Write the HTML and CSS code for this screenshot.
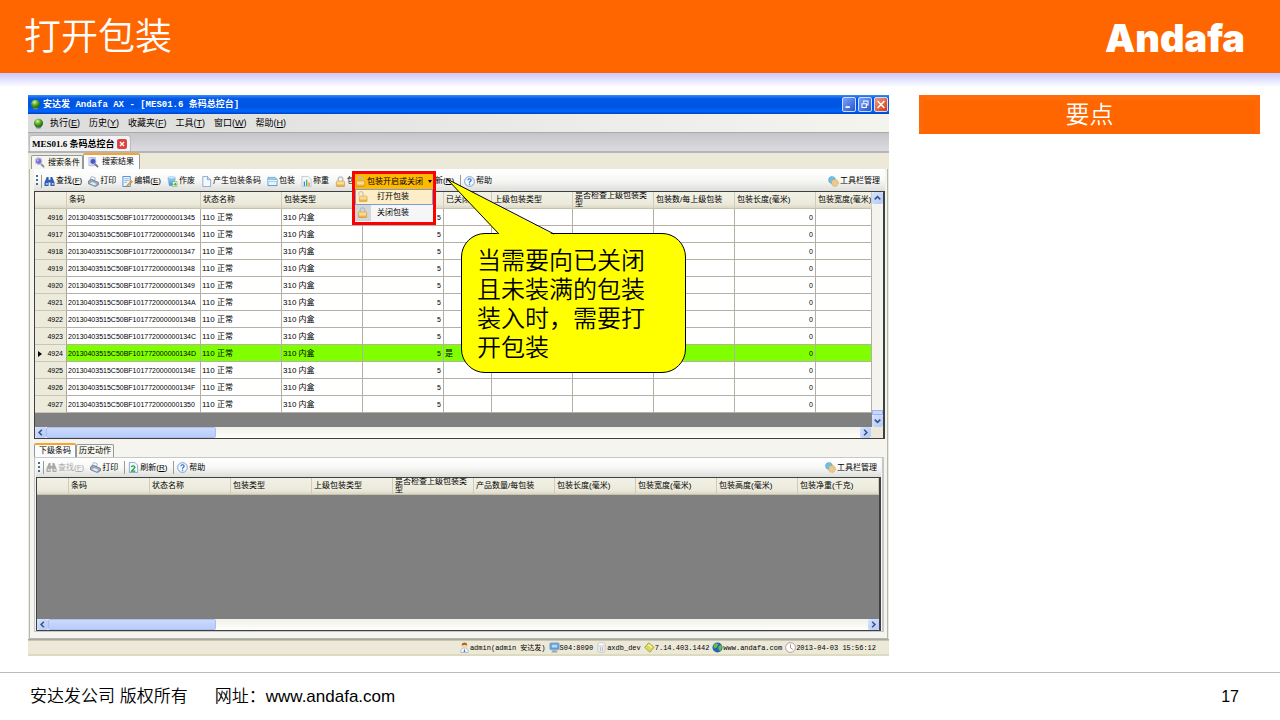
FILE: index.html
```html
<!DOCTYPE html>
<html lang="zh-CN">
<head>
<meta charset="utf-8">
<title>打开包装</title>
<link rel="stylesheet" href="styles.css">
</head>
<body>
<svg class="defs" aria-hidden="true">
  <defs>
    <radialGradient id="gGreen" cx=".4" cy=".3" r=".7"><stop offset="0" stop-color="#d8f5a8"/><stop offset=".5" stop-color="#4fa822"/><stop offset="1" stop-color="#1c5c0c"/></radialGradient>
    <linearGradient id="gGold" x2="0" y2="1"><stop offset="0" stop-color="#fde9a8"/><stop offset="1" stop-color="#e8a52c"/></linearGradient>
    <linearGradient id="gBlue" x2="0" y2="1"><stop offset="0" stop-color="#a9d6f5"/><stop offset="1" stop-color="#3f86cf"/></linearGradient>
  </defs>
  <symbol id="globe" viewBox="0 0 12 12"><ellipse cx="6" cy="5.5" rx="5" ry="4.8" fill="url(#gGreen)"/><path d="M3 9.5h6l-1 2H4z" fill="#6d7a86"/></symbol>
  <symbol id="search" viewBox="0 0 12 12"><path d="M7 7l4 4" stroke="#8a8a9c" stroke-width="2"/><circle cx="5" cy="4.5" r="3.6" fill="#7a6fd8" stroke="#c9c9dd" stroke-width="1.2"/><circle cx="4" cy="3.6" r="1.2" fill="#b9b4f3"/></symbol>
  <symbol id="searchdoc" viewBox="0 0 12 12"><path d="M1 .5h7v9H1z" fill="#e9eefb" stroke="#8da0cc" stroke-width=".7"/><path d="M7 7l4 4" stroke="#777" stroke-width="2"/><circle cx="5.5" cy="4.8" r="3.2" fill="#4a55c8" stroke="#b7c2ea"/></symbol>
  <symbol id="find" viewBox="0 0 12 12"><path d="M3 1h2v3h2V1h2l2.500 6v4H7V7H5v4H.5V7z" fill="currentColor"/><path d="M2 7.500h2v2H2zM8.500 7.500h2v2h-2z" fill="#fff" opacity=".7"/></symbol>
  <symbol id="print" viewBox="0 0 12 12"><path d="M2 4l2-3.500 4 1.500-1 3z" fill="#fff" stroke="#7c93b4" stroke-width=".7"/><path d="M.5 5.500L4 3.500l7.500 3.500v2.500L8 11.500.5 8.500z" fill="#9aa7b8" stroke="#566479" stroke-width=".7"/><path d="M2 8l5 2.300 2.500-1.500-5-2.300z" fill="#d7effc"/></symbol>
  <symbol id="edit" viewBox="0 0 12 12"><path d="M1 .5h8v11H1z" fill="#eef6ff" stroke="#4b86cc"/><path d="M2.500 3h5M2.500 5h5M2.500 7h3" stroke="#71a6dc" stroke-width=".8"/><path d="M5 10l5.500-5 1.200 1.300L6.200 11 4.500 11.500z" fill="#f3a62d" stroke="#b06d12" stroke-width=".4"/></symbol>
  <symbol id="trash" viewBox="0 0 12 12"><path d="M1 2h8L8 10.500H2.500z" fill="url(#gBlue)" stroke="#68a9dc" stroke-width=".6"/><ellipse cx="5" cy="2" rx="4" ry="1.200" fill="#e0f3ff" stroke="#68a9dc" stroke-width=".6"/><path d="M6 6h5v5.500H6z" fill="#eafbe6" stroke="#62b04b" stroke-width=".6"/><path d="M7 9h3M8.500 7.300L10 9l-1.500 1.700" fill="none" stroke="#2e9a29"/></symbol>
  <symbol id="doc" viewBox="0 0 12 12"><path d="M2 .5h5l3.500 3.500v7.500H2z" fill="#f4f9ff" stroke="#6e93cb" stroke-width=".8"/><path d="M7 .5V4h3.500" fill="#cfe0f6" stroke="#6e93cb" stroke-width=".8"/></symbol>
  <symbol id="box" viewBox="0 0 12 12"><path d="M1 1.500h8l2 2v7H1z" fill="url(#gBlue)" stroke="#3d86bb" stroke-width=".6"/><path d="M1.500 5h9v5h-9z" fill="#e4f4fc"/><path d="M.5 4h11v2H.5z" fill="#eefaff" stroke="#68a5ca" stroke-width=".5"/></symbol>
  <symbol id="weigh" viewBox="0 0 12 12"><path d="M1 .5h7l3 3v8H1z" fill="#f2f6fb" stroke="#a9b8cc" stroke-width=".7"/><path d="M3 6h1.500v5H3z" fill="#3f8bd8"/><path d="M5.500 4H7v7H5.500z" fill="#52b548"/><path d="M8 7h1.500v4H8z" fill="#e6843a"/></symbol>
  <symbol id="lock" viewBox="0 0 12 12"><path d="M3.500 6V3.500a2.500 2.500 0 0 1 5 0V6" fill="none" stroke="#b9bcc2" stroke-width="1.500"/><rect x="1.500" y="5.500" width="9" height="6" rx="1" fill="url(#gGold)" stroke="#c98d2a" stroke-width=".6"/><path d="M2.500 8.500h7" stroke="#fff2c4" stroke-width=".8"/></symbol>
  <symbol id="unlock" viewBox="0 0 12 12"><path d="M2 5V3a2.300 2.300 0 0 1 4.600 0v3" fill="none" stroke="#c4c6ca" stroke-width="1.400"/><rect x="2.500" y="5.500" width="8.500" height="6" rx="1" fill="url(#gGold)" stroke="#d09a40" stroke-width=".6"/><path d="M3.500 8.500h6.500" stroke="#fff2c4" stroke-width=".8"/></symbol>
  <symbol id="refresh" viewBox="0 0 12 12"><path d="M1.500 .5h6L10.500 3.500v8h-9z" fill="#eef6ff" stroke="#6e93cb" stroke-width=".8"/><path d="M3.500 5.500c1-2 4-1.500 4 .5L4 10h4" fill="none" stroke="#2c9d2f" stroke-width="1.400"/></symbol>
  <symbol id="help" viewBox="0 0 12 12"><circle cx="6" cy="6" r="5.300" fill="#f2f8ff" stroke="#5f93d2" stroke-width=".9"/><path d="M4.200 4.600c.2-2.200 3.700-2 3.600 0C7.700 5.800 6 5.800 6 7.300" fill="none" stroke="#2b62b8" stroke-width="1.200"/><path d="M5.400 8.300h1.300v1.300H5.400z" fill="#2b62b8"/></symbol>
  <symbol id="gears" viewBox="0 0 12 12"><circle cx="4.300" cy="4.300" r="3.700" fill="#6fc0e8" stroke="#3f8fc2" stroke-width=".7" stroke-dasharray="1.500 .8"/><circle cx="7.600" cy="7.600" r="3.700" fill="#f3cf8d" stroke="#c28d3d" stroke-width=".7" stroke-dasharray="1.500 .8"/><circle cx="7.600" cy="7.600" r="1.300" fill="#fff" stroke="#c28d3d" stroke-width=".6"/></symbol>
  <symbol id="user" viewBox="0 0 12 12"><path d="M2 11.500c0-4 1.500-5 4-5s4 1 4 5z" fill="#f4f7fd" stroke="#8f9fc2" stroke-width=".7"/><circle cx="6" cy="4" r="2.800" fill="#f7d2a2"/><path d="M3 4C2.500-.5 9.500-.5 9 4 7.500 2.500 5 2.500 3 4z" fill="#a8622b"/><path d="M6 7l-1 4h2z" fill="#4676d0"/></symbol>
  <symbol id="server" viewBox="0 0 12 12"><rect x="1" y="1" width="10" height="7.500" rx="1" fill="#5d9be0" stroke="#8fa6c2"/><path d="M3 3h6v3H3z" fill="#b6dbfb"/><path d="M4 9h4l1.500 2.500h-7z" fill="#98a7b8"/></symbol>
  <symbol id="db" viewBox="0 0 12 12"><path d="M2 2.500v7c0 2.600 8 2.600 8 0v-7z" fill="#ececef" stroke="#b1b1b8" stroke-width=".6"/><ellipse cx="6" cy="2.500" rx="4" ry="1.700" fill="#fff" stroke="#b1b1b8" stroke-width=".6"/><path d="M5 5.500v4.500M7 5.500v4.500" stroke="#b9bcc6"/></symbol>
  <symbol id="ver" viewBox="0 0 12 12"><path d="M5 .8l6 5-4.500 5.400L.8 6z" fill="#dcd95a" stroke="#98962b" stroke-width=".8"/><path d="M4.800 3L8.500 6" stroke="#f8f7c0" stroke-width="1.400"/></symbol>
  <symbol id="earth" viewBox="0 0 12 12"><circle cx="6" cy="6" r="5.500" fill="#2a62b5"/><path d="M2 3l3-2 2 2-2 3-3 1zM7 5l3-2 1 3-2 4-2-2z" fill="#5ec145"/></symbol>
  <symbol id="clock" viewBox="0 0 12 12"><circle cx="6" cy="6" r="5.300" fill="#fff" stroke="#9a9aa2"/><path d="M6 2.500V6.500L8.500 8" fill="none" stroke="#c0564a" stroke-width=".8"/></symbol>
</svg>

<header class="banner">
  <h1>打开包装</h1>
  <div class="brand">Andafa</div>
</header>

<main class="content">
  <section class="window">
    <div class="titlebar">
      <svg class="icon"><use href="#globe"/></svg>
      <span class="caption">安达发 Andafa AX - [MES01.6 条码总控台]</span>
      <button class="winbtn" aria-label="最小化"><svg viewBox="0 0 14 14"><path d="M3 9h5v2H3z" fill="#fff"/></svg></button>
      <button class="winbtn" aria-label="还原"><svg viewBox="0 0 14 14"><path d="M5.500 5V3h5v4.500h-2M3.500 6h5v4.500h-5z" fill="none" stroke="#fff" stroke-width="1.200"/></svg></button>
      <button class="winbtn close" aria-label="关闭"><svg viewBox="0 0 14 14"><path d="M3 3l8 8M11 3l-8 8" stroke="#fff" stroke-width="1.800"/></svg></button>
    </div>
    <nav class="menubar">
      <svg class="icon"><use href="#globe"/></svg>
      <button>执行(<u>E</u>)</button>
      <button>历史(<u>Y</u>)</button>
      <button>收藏夹(<u>F</u>)</button>
      <button>工具(<u>T</u>)</button>
      <button>窗口(<u>W</u>)</button>
      <button>帮助(<u>H</u>)</button>
    </nav>
    <div class="doctabs">
      <div class="doctab"><span>MES01.6 条码总控台</span><button class="tabclose" aria-label="关闭标签"><svg viewBox="0 0 10 10"><path d="M3 3l4 4M7 3L3 7" stroke="#fff" stroke-width="1.400"/></svg></button></div>
    </div>

    <div class="workspace">
      <div class="tabs">
        <button class="tab"><svg class="icon"><use href="#search"/></svg>搜索条件</button>
        <button class="tab active"><svg class="icon"><use href="#searchdoc"/></svg>搜索结果</button>
      </div>
      <div class="panel">
        <div class="toolbar">
          <i class="grip"></i><i class="sep"></i>
          <button class="tool find"><svg class="icon"><use href="#find"/></svg>查找(<u>F</u>)</button>
          <button class="tool"><svg class="icon"><use href="#print"/></svg>打印</button>
          <button class="tool"><svg class="icon"><use href="#edit"/></svg>编辑(<u>E</u>)</button>
          <button class="tool"><svg class="icon"><use href="#trash"/></svg>作废</button>
          <button class="tool"><svg class="icon"><use href="#doc"/></svg>产生包装条码</button>
          <button class="tool"><svg class="icon"><use href="#box"/></svg>包装</button>
          <button class="tool"><svg class="icon"><use href="#weigh"/></svg>称重</button>
          <button class="tool"><svg class="icon"><use href="#lock"/></svg>包装</button>
          <span class="dropslot"></span>
          <button class="tool"><svg class="icon"><use href="#refresh"/></svg>刷新(<u>R</u>)</button>
          <i class="sep"></i>
          <button class="tool"><svg class="icon"><use href="#help"/></svg>帮助</button>
          <button class="tool manage"><svg class="icon"><use href="#gears"/></svg>工具栏管理</button>
        </div>

        <div class="grid">
          <div class="gridbody">
            <div class="tablebox">
              <table class="data top">
                <colgroup><col class="c-num"><col class="c-code"><col class="c-std"><col class="c-std"><col class="c-std"><col class="c-closed"><col class="c-std"><col class="c-std"><col class="c-std"><col class="c-std"><col></colgroup>
                <thead><tr><th></th><th>条码</th><th>状态名称</th><th>包装类型</th><th>产品数量</th><th>已关闭</th><th>上级包装类型</th><th class="wrap"><div>是否检查上级包装类型</div></th><th>包装数/每上级包装</th><th>包装长度(毫米)</th><th>包装宽度(毫米)</th></tr></thead>
                <tbody>
                  <tr><th>4916</th><td class="code">20130403515C50BF1017720000001345</td><td>110 正常</td><td>310 内盒</td><td class="n">5</td><td></td><td></td><td></td><td></td><td class="n">0</td><td></td></tr>
                  <tr><th>4917</th><td class="code">20130403515C50BF1017720000001346</td><td>110 正常</td><td>310 内盒</td><td class="n">5</td><td></td><td></td><td></td><td></td><td class="n">0</td><td></td></tr>
                  <tr><th>4918</th><td class="code">20130403515C50BF1017720000001347</td><td>110 正常</td><td>310 内盒</td><td class="n">5</td><td></td><td></td><td></td><td></td><td class="n">0</td><td></td></tr>
                  <tr><th>4919</th><td class="code">20130403515C50BF1017720000001348</td><td>110 正常</td><td>310 内盒</td><td class="n">5</td><td></td><td></td><td></td><td></td><td class="n">0</td><td></td></tr>
                  <tr><th>4920</th><td class="code">20130403515C50BF1017720000001349</td><td>110 正常</td><td>310 内盒</td><td class="n">5</td><td></td><td></td><td></td><td></td><td class="n">0</td><td></td></tr>
                  <tr><th>4921</th><td class="code">20130403515C50BF101772000000134A</td><td>110 正常</td><td>310 内盒</td><td class="n">5</td><td></td><td></td><td></td><td></td><td class="n">0</td><td></td></tr>
                  <tr><th>4922</th><td class="code">20130403515C50BF101772000000134B</td><td>110 正常</td><td>310 内盒</td><td class="n">5</td><td></td><td></td><td></td><td></td><td class="n">0</td><td></td></tr>
                  <tr><th>4923</th><td class="code">20130403515C50BF101772000000134C</td><td>110 正常</td><td>310 内盒</td><td class="n">5</td><td></td><td></td><td></td><td></td><td class="n">0</td><td></td></tr>
                  <tr class="current"><th>4924</th><td class="code">20130403515C50BF101772000000134D</td><td>110 正常</td><td>310 内盒</td><td class="n">5</td><td>是</td><td></td><td></td><td></td><td class="n">0</td><td></td></tr>
                  <tr><th>4925</th><td class="code">20130403515C50BF101772000000134E</td><td>110 正常</td><td>310 内盒</td><td class="n">5</td><td></td><td></td><td></td><td></td><td class="n">0</td><td></td></tr>
                  <tr><th>4926</th><td class="code">20130403515C50BF101772000000134F</td><td>110 正常</td><td>310 内盒</td><td class="n">5</td><td></td><td></td><td></td><td></td><td class="n">0</td><td></td></tr>
                  <tr><th>4927</th><td class="code">20130403515C50BF1017720000001350</td><td>110 正常</td><td>310 内盒</td><td class="n">5</td><td></td><td></td><td></td><td></td><td class="n">0</td><td></td></tr>
                </tbody>
              </table>
            </div>
            <div class="vscroll">
              <span class="arrow"><svg viewBox="0 0 12 12"><path d="M3 7.500l3-3 3 3" fill="none" stroke="#3c5580" stroke-width="1.800"/></svg></span>
              <span class="vthumb"></span>
              <span class="arrow"><svg viewBox="0 0 12 12"><path d="M3 4.500l3 3 3-3" fill="none" stroke="#3c5580" stroke-width="1.800"/></svg></span>
            </div>
          </div>
          <div class="hscroll">
            <span class="arrow"><svg viewBox="0 0 12 12"><path d="M7.500 3l-3 3 3 3" fill="none" stroke="#3c5580" stroke-width="1.800"/></svg></span>
            <span class="hthumb"></span>
            <span class="arrow end"><svg viewBox="0 0 12 12"><path d="M4.500 3l3 3-3 3" fill="none" stroke="#3c5580" stroke-width="1.800"/></svg></span>
            <span class="corner"></span>
          </div>
        </div>

        <div class="tabs lower">
          <button class="tab active">下级条码</button>
          <button class="tab">历史动作</button>
        </div>
        <div class="subpanel">
          <div class="toolbar">
            <i class="grip"></i><i class="sep"></i>
            <button class="tool find" disabled><svg class="icon"><use href="#find"/></svg>查找(<u>F</u>)</button>
            <button class="tool"><svg class="icon"><use href="#print"/></svg>打印</button>
            <i class="sep"></i>
            <button class="tool"><svg class="icon"><use href="#refresh"/></svg>刷新(<u>R</u>)</button>
            <i class="sep"></i>
            <button class="tool"><svg class="icon"><use href="#help"/></svg>帮助</button>
            <button class="tool manage"><svg class="icon"><use href="#gears"/></svg>工具栏管理</button>
          </div>
          <div class="grid">
            <div class="tablebox empty">
              <table class="data bottom">
                <colgroup><col class="c-num"><col class="c-std"><col class="c-std"><col class="c-std"><col class="c-std"><col class="c-std"><col class="c-std"><col class="c-std"><col class="c-std"><col class="c-std"><col class="c-std"><col></colgroup>
                <thead><tr><th></th><th>条码</th><th>状态名称</th><th>包装类型</th><th>上级包装类型</th><th class="wrap"><div>是否检查上级包装类型</div></th><th>产品数量/每包装</th><th>包装长度(毫米)</th><th>包装宽度(毫米)</th><th>包装高度(毫米)</th><th>包装净重(千克)</th><th></th></tr></thead>
              </table>
            </div>
            <div class="hscroll">
              <span class="arrow"><svg viewBox="0 0 12 12"><path d="M7.500 3l-3 3 3 3" fill="none" stroke="#3c5580" stroke-width="1.800"/></svg></span>
              <span class="hthumb"></span>
              <span class="arrow end"><svg viewBox="0 0 12 12"><path d="M4.500 3l3 3-3 3" fill="none" stroke="#3c5580" stroke-width="1.800"/></svg></span>
            </div>
          </div>
        </div>
      </div>
    </div>

    <div class="statusbar">
      <span class="user"><svg class="icon"><use href="#user"/></svg>admin(admin 安达发)</span>
      <span><svg class="icon"><use href="#server"/></svg>S04:8090</span>
      <span><svg class="icon"><use href="#db"/></svg>axdb_dev</span>
      <span><svg class="icon"><use href="#ver"/></svg>7.14.403.1442</span>
      <span><svg class="icon"><use href="#earth"/></svg>www.andafa.com</span>
      <span><svg class="icon"><use href="#clock"/></svg>2013-04-03 15:56:12</span>
    </div>

    <div class="popup">
      <button class="popuphead"><svg class="icon"><use href="#lock"/></svg>包装开启或关闭<i class="caret"></i></button>
      <button class="popupitem hot"><span><svg class="icon"><use href="#unlock"/></svg></span>打开包装</button>
      <button class="popupitem"><span><svg class="icon"><use href="#lock"/></svg></span>关闭包装</button>
    </div>

    <div class="callout">
      <svg class="tail" viewBox="0 0 120 57"><path d="M53 57L1 1l107 56z" fill="#ff0"/><path d="M53 56L1 1l107 55" fill="none" stroke="#000"/></svg>
      <p>当需要向已关闭且未装满的包装装入时，需要打开包装</p>
    </div>
  </section>

  <aside class="points"><h2>要点</h2></aside>
</main>

<footer class="footer">
  <span>安达发公司 版权所有</span>
  <span>网址：<a href="#">www.andafa.com</a></span>
  <span class="page">17</span>
</footer>
</body>
</html>
```
FILE: styles.css
```css
* { box-sizing: border-box; }
body {
  margin: 0;
  min-height: 100vh;
  display: flex;
  flex-direction: column;
  background: #fff;
  color: #000;
  font-family: "Liberation Sans", "Noto Sans CJK SC", sans-serif;
}
button { margin: 0; padding: 0; border: 0; background: none; color: inherit; font: inherit; white-space: nowrap; }
.defs { position: absolute; width: 0; height: 0; }
.icon { width: 11px; height: 11px; flex: none; }

/* Slide banner */
.banner {
  height: 73px;
  padding: 2px 35px 0 24px;
  display: flex;
  align-items: center;
  justify-content: space-between;
  background: #f60;
  color: #fff;
}
.banner h1 { margin: 0; font-size: 37px; font-weight: 350; line-height: 48px; }
.brand { font: 900 38px/48px Inter, sans-serif; }

.content {
  flex: 1;
  padding: 22px 20px 16px 28px;
  display: grid;
  grid-template-columns: 861fr 341fr;
  gap: 30px;
  align-items: start;
  background: linear-gradient(#c8c8ff, #fff 14px);
}
.points h2 {
  margin: 0;
  height: 39px;
  border: 5px solid;
  border-color: #ff6c0a #ff6806 #ff6500 #ff6806;
  background: #f60;
  color: #fff;
  font-size: 24px;
  font-weight: 350;
  line-height: 30px;
  text-align: center;
}

/* Application window */
.window { position: relative; min-width: 0; background: #ece9d8; color: #000; font-size: 8px; line-height: 10px; }
.titlebar {
  height: 19px;
  padding: 0 1px 0 2px;
  display: flex;
  align-items: center;
  gap: 2px;
  background: linear-gradient(#3a8bf5, #0058e6 20%, #0054e3 60%, #0066fe 85%, #0042c0);
  color: #fff;
}
.caption { flex: 1; font: bold 9px/12px "Liberation Mono", "Noto Sans CJK SC", monospace; }
.winbtn {
  width: 14px;
  height: 15px;
  border: 1px solid #cfdcf8;
  border-radius: 2px;
  background: linear-gradient(135deg, #7ba2f5, #2456d8);
}
.winbtn.close { background: linear-gradient(135deg, #f09a7c, #d43a12); }
.winbtn svg { display: block; width: 12px; height: 13px; }
.menubar {
  height: 18px;
  padding-left: 5px;
  display: flex;
  align-items: center;
  gap: 9px;
  background: linear-gradient(90deg, #dcdcdc, #f4f4ef);
  font-size: 9px;
}
.menubar .icon { margin-right: -3px; }
.doctabs {
  height: 21px;
  padding: 2px 0 0 1px;
  border-top: 1px solid #aaa;
  border-bottom: 2px solid #b4b4bc;
  background: linear-gradient(#c6c6ca, #dcdce0);
}
.doctab {
  width: 102px;
  height: 16px;
  padding: 0 3px 0 2px;
  display: flex;
  align-items: center;
  justify-content: space-between;
  border: 1px solid #bbb;
  border-bottom: 0;
  border-radius: 3px 3px 0 0;
  background: #f3f3f3;
  font: bold 9px/12px "Liberation Serif", "Noto Sans CJK SC", serif;
  white-space: nowrap;
}
.tabclose { width: 10px; height: 10px; border-radius: 2px; background: #dc4444; }
.tabclose svg { display: block; width: 10px; height: 10px; }

.workspace { padding: 0 1px; background: #ece9d8; border-bottom: 1px solid #aca899; }
.tabs { height: 16px; padding-left: 2px; display: flex; align-items: flex-end; }
.tab {
  height: 14px;
  padding: 0 2px;
  display: flex;
  align-items: center;
  gap: 3px;
  border: 1px solid #919b9c;
  border-bottom: 0;
  border-radius: 2px 2px 0 0;
  background: #f6f5ee;
}
.tab.active { height: 16px; padding: 0 5px 0 4px; border-top: 2px solid #f5a623; background: #fcfcfe; }
.panel { padding: 0 2px 6px 4px; border: 1px solid #b5b8b0; border-top: 0; background: #f5f4ee; }
.lower { height: 18px; padding-left: 0; padding-top: 4px; }
.lower .tab { height: 13px; }
.lower .tab.active { height: 14px; padding: 0 4px; }
.subpanel { margin-right: 1px; padding: 0 1px; border: 1px solid #c3c8ca; border-right-width: 2px; }

/* Toolbars */
.toolbar {
  height: 22px;
  padding: 2px 5px 0 2px;
  display: flex;
  align-items: center;
  gap: 6px;
  background: linear-gradient(#fff, #f8f8f6 50%, #dededb);
}
.subpanel .toolbar { height: 19px; padding-top: 0; padding-right: 4px; }
.tool { display: flex; align-items: center; gap: 0; }
.tool .icon { margin-right: 1px; }
.find .icon { color: #2f5fb5; }
.find:disabled, .find:disabled .icon { color: #aaa; }
.grip { width: 2px; height: 12px; background: repeating-linear-gradient(#4a6a9c 0 2px, transparent 2px 4px); }
.sep { width: 1px; height: 13px; margin-right: -3px; background: #9a9a9a; }
.grip + .sep { margin-left: -3px; margin-right: -4px; }
.dropslot { width: 40px; }
.manage { margin-left: auto; }

/* Data grids */
.grid { border: 1px solid #404040; border-right-width: 2px; background: #fff; }
.gridbody { display: flex; }
.tablebox { flex: 1; min-width: 0; padding-bottom: 14px; overflow: hidden; background: #808080; }
.tablebox.empty { height: 141px; }
.data { width: 100%; table-layout: fixed; border-collapse: separate; border-spacing: 0; background: #fff; }
.c-num { width: 32px; }
.c-code { width: 134px; }
.c-std { width: 81px; }
.c-closed { width: 48px; }
.data th, .data td { height: 17px; padding: 2px 2px 0 1px; overflow: hidden; font-weight: normal; line-height: 10px; white-space: nowrap; text-align: left; }
.data td { border-right: 1px solid #b4b0a4; border-bottom: 1px solid #b4b0a4; }
.data thead th { padding: 0 0 0 2px; border-right: 1px solid #cfccbc; border-bottom: 1px solid #c6c2ae; background: linear-gradient(#f2f1e6, #ebeadb 75%, #dcd8c4); }
.data .wrap div { height: 16px; width: 76px; overflow: hidden; line-height: 8px; white-space: normal; }
.data tbody th { padding-right: 3px; border-right: 1px solid #aaa69a; border-bottom: 1px solid #c9c6b6; background: #ebeadb; text-align: right; font-size: 7px; }
.data .code { font-size: 7px; }
.data .n { text-align: right; font-size: 7px; }
.data .current td { background: #80ff00; }
.current th::before { content: ""; float: left; margin: 2px 0 0 2px; border: 3px solid transparent; border-left: 4px solid #000; border-right: 0; }

/* Scroll bars */
.vscroll { width: 11px; display: flex; flex-direction: column; background: #f4f3ee; }
.arrow { flex: none; width: 11px; height: 12px; border-radius: 2px; background: linear-gradient(135deg, #d6e2ff, #b4c8f8); }
.arrow svg { display: block; width: 11px; height: 12px; }
.vthumb { height: 5px; margin-top: auto; border: 1px solid #9fb5ee; background: #c6d6fd; }
.hscroll { height: 11px; display: flex; background: linear-gradient(#f1f0e8, #fefefb); }
.hscroll .arrow, .hscroll .arrow svg { height: 11px; }
.hthumb { width: 20%; border: 1px solid #aabef2; border-radius: 2px; background: linear-gradient(#cbdafe, #b9cdfb); }
.hscroll .end { margin-left: auto; }
.corner { width: 12px; background: #ece9d8; }

.statusbar {
  height: 16px;
  padding-right: 13px;
  display: flex;
  align-items: center;
  justify-content: flex-end;
  gap: 3px;
  border-top: 1px solid #c9c5b2;
  border-bottom: 2px solid #dedabf;
  background: #ece9d8;
  font: 7px/10px "Liberation Mono", "Noto Sans CJK SC", monospace;
}
.statusbar span { display: flex; align-items: center; white-space: pre; }

/* Overlays */
.popup { position: absolute; left: 324px; top: 76px; width: 84px; padding-bottom: 1px; border: 3px solid #f00; background: #f6f6f6; }
.popuphead { width: 100%; height: 15px; display: flex; align-items: center; gap: 1px; background: #ffb900; }
.caret { margin-left: auto; margin-right: 1px; border: 2px solid transparent; border-top: 3px solid #000; border-bottom: 0; }
.popupitem { width: 100%; height: 16px; display: flex; align-items: center; gap: 6px; }
.popupitem span { width: 16px; height: 100%; padding: 2px; background: #d5d5d5; }
.popupitem .icon { display: block; }
.hot { border: 1px solid #7a9ad8; background: #fdeec8; }
.hot span { width: 15px; padding: 1px; background: none; }

.callout { position: absolute; left: 433px; top: 138px; width: 225px; padding: 12px 38px 10px 15px; border: 1px solid #000; border-radius: 24px; background: #ff0; color: #000; font-size: 24px; font-weight: 350; line-height: 29px; }
.callout p { width: 170px; margin: 0; }
.tail { position: absolute; left: -16px; top: -56px; width: 120px; height: 57px; }

/* Slide footer */
.footer {
  height: 48px;
  padding: 0 41px 0 30px;
  display: flex;
  align-items: center;
  gap: 27px;
  border-top: 1px solid #bbb;
  font-size: 17px;
  font-weight: 350;
  line-height: 24px;
}
.footer a { color: inherit; text-decoration: none; }
.page { margin-left: auto; font-size: 16px; }
```
